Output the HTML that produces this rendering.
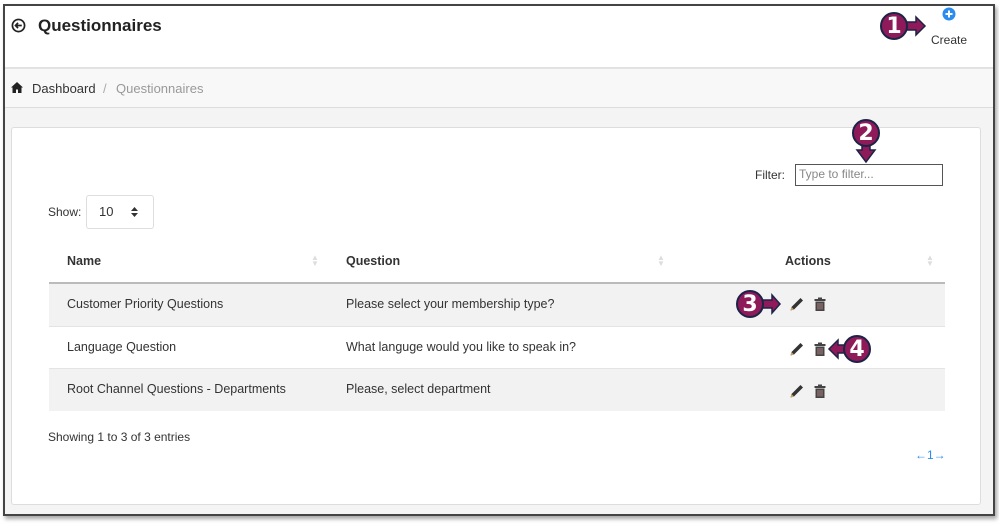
<!DOCTYPE html>
<html><head><style>
body{margin:0;width:999px;height:524px;background:#fff;font-family:"Liberation Sans",sans-serif;position:relative;overflow:hidden;color:#333}
.frame{position:absolute;left:3px;top:4px;width:988px;height:508px;border:2px solid #444;background:#f4f4f4;box-shadow:2px 3px 4px rgba(0,0,0,.35);overflow:hidden}
.hdr{position:absolute;left:0;top:0;right:0;height:61px;background:#fff;border-bottom:2px solid #e2e2e2}
.bc{position:absolute;left:0;top:63px;right:0;height:38px;background:#f8f8f8;border-bottom:1px solid #ddd;font-size:13px}
.card{position:absolute;left:6px;top:121px;width:968px;height:376px;background:#fff;border:1px solid #ddd;border-radius:3px}
.t{position:absolute;font-size:13px;white-space:nowrap}
.row{position:absolute;left:37px;width:896px}
.badge{position:absolute;width:24px;height:24px;border-radius:50%;background:#8e1a5a;border:2px solid #1d2347;color:#fff;font-size:22px;font-weight:bold;text-align:center;line-height:25px;font-family:"DejaVu Sans",sans-serif}
</style></head><body>
<div class="frame">
<div class="hdr">
 <svg style="position:absolute;left:6px;top:12px" width="15" height="15" viewBox="0 0 16 16"><circle cx="8" cy="8" r="6.5" fill="none" stroke="#222" stroke-width="1.8"/><path d="M11.5 8H5M7.5 5.2L4.8 8l2.7 2.8" fill="none" stroke="#222" stroke-width="1.8"/></svg>
 <div class="t" style="left:33px;top:10px;font-size:17px;font-weight:bold;color:#222">Questionnaires</div>
 <svg style="position:absolute;left:937px;top:1px" width="14" height="14" viewBox="0 0 14 14"><circle cx="7" cy="7" r="6.5" fill="#2a8cf0"/><path d="M7 3.5v7M3.5 7h7" stroke="#fff" stroke-width="2"/></svg>
 <div class="t" style="left:926px;top:27px;font-size:12px;color:#333">Create</div>
</div>
<div class="bc">
 <svg style="position:absolute;left:6px;top:13px" width="12" height="11" viewBox="0 0 12 11"><path d="M6 0L0 5.5h1.5V11h3.5V7.5h2V11h3.5V5.5H12z" fill="#222"/></svg>
 <div class="t" style="left:27px;top:12px;color:#333">Dashboard</div>
 <div class="t" style="left:98px;top:12px;color:#aaa">/</div>
 <div class="t" style="left:111px;top:12px;color:#999">Questionnaires</div>
</div>
<div class="card">
 <div class="t" style="left:743px;top:40px;font-size:12px">Filter:</div>
 <div style="position:absolute;left:783px;top:36px;width:146px;height:20px;border:1px solid #555"></div>
 <div class="t" style="left:787px;top:39px;font-size:12px;color:#888">Type to filter...</div>
 <div class="t" style="left:36px;top:77px;font-size:12px">Show:</div>
 <div style="position:absolute;left:74px;top:67px;width:66px;height:32px;border:1px solid #ddd;border-radius:3px"></div>
 <div class="t" style="left:87px;top:76px;font-size:13px">10</div>
 <svg style="position:absolute;left:119px;top:79px" width="7" height="10" viewBox="0 0 7 10"><path d="M0 4L3.5 0 7 4zM0 6l3.5 4L7 6z" fill="#333"/></svg>
 <div class="row" style="top:112px;height:42px;border-bottom:2px solid #bbb"></div>
 <div class="t" style="left:55px;top:126px;font-weight:bold;font-size:12.5px">Name</div>
 <div class="t" style="left:334px;top:126px;font-weight:bold;font-size:12.5px">Question</div>
 <div class="t" style="left:773px;top:126px;font-weight:bold;font-size:12.5px">Actions</div>
 <div class="t" style="left:299px;top:127px;color:#ddd;font-size:8px;line-height:6px">▲<br>▼</div>
 <div class="t" style="left:645px;top:127px;color:#ddd;font-size:8px;line-height:6px">▲<br>▼</div>
 <div class="t" style="left:914px;top:127px;color:#ddd;font-size:8px;line-height:6px">▲<br>▼</div>
 <div class="row" style="top:156px;height:42px;background:#f2f2f2;border-bottom:1px solid #e4e4e4"></div>
 <div class="row" style="top:199px;height:41px;background:#fff;border-bottom:1px solid #e4e4e4"></div>
 <div class="row" style="top:241px;height:42px;background:#f2f2f2"></div>
 <div class="t" style="left:55px;top:169px;font-size:12.5px">Customer Priority Questions</div>
 <div class="t" style="left:334px;top:169px;font-size:12.5px">Please select your membership type?</div>
 <div class="t" style="left:55px;top:212px;font-size:12.5px">Language Question</div>
 <div class="t" style="left:334px;top:212px;font-size:12.5px">What languge would you like to speak in?</div>
 <div class="t" style="left:55px;top:254px;font-size:12.5px">Root Channel Questions - Departments</div>
 <div class="t" style="left:334px;top:254px;font-size:12.5px">Please, select department</div>
 <div class="t" style="left:36px;top:302px;font-size:12px">Showing 1 to 3 of 3 entries</div>
 <div class="t" style="left:903px;top:320px;font-size:12px;color:#2a8cf0">←1→</div>
</div>
</div>
<svg width="0" height="0" style="position:absolute"><defs>
<g id="pen"><path d="M1.5 14.5l1-3.5 9-9 2.5 2.5-9 9z" fill="#333"/><path d="M1.5 14.5l1-3.5 2.5 2.5z" fill="#c9a36a"/></g>
<g id="bin"><rect x="0.5" y="2" width="11" height="2" fill="#444"/><rect x="4" y="0.5" width="4" height="2" fill="#444"/><path d="M1.5 4.5h9v9.5h-9z" fill="#444"/><path d="M4 6v6.5M6 6v6.5M8 6v6.5" stroke="#b88" stroke-width="0.9"/></g>
</defs></svg>
<svg style="position:absolute;left:789px;top:296px" width="16" height="16"><use href="#pen"/></svg>
<svg style="position:absolute;left:814px;top:297px" width="12" height="15"><use href="#bin"/></svg>
<svg style="position:absolute;left:789px;top:341px" width="16" height="16"><use href="#pen"/></svg>
<svg style="position:absolute;left:814px;top:342px" width="12" height="15"><use href="#bin"/></svg>
<svg style="position:absolute;left:789px;top:383px" width="16" height="16"><use href="#pen"/></svg>
<svg style="position:absolute;left:814px;top:384px" width="12" height="15"><use href="#bin"/></svg>
<svg style="position:absolute;left:0;top:0" width="999" height="524">
 <g stroke="#1d2347" stroke-width="1.5" fill="#8e1a5a">
  <path d="M906 22h10v-5l9 9-9 9v-5h-10z"/>
  <path d="M862 145v5h-5l9 12 9-12h-5v-5z"/>
  <path d="M762 300h10v-5l8 9-8 9v-5h-10z"/>
  <path d="M846 345h-8v-5l-9 9 9 9v-5h8z"/>
 </g>
</svg>
<div class="badge" style="left:880px;top:12px">1</div>
<div class="badge" style="left:852px;top:119px">2</div>
<div class="badge" style="left:736px;top:290px">3</div>
<div class="badge" style="left:843px;top:335px">4</div>
</body></html>
